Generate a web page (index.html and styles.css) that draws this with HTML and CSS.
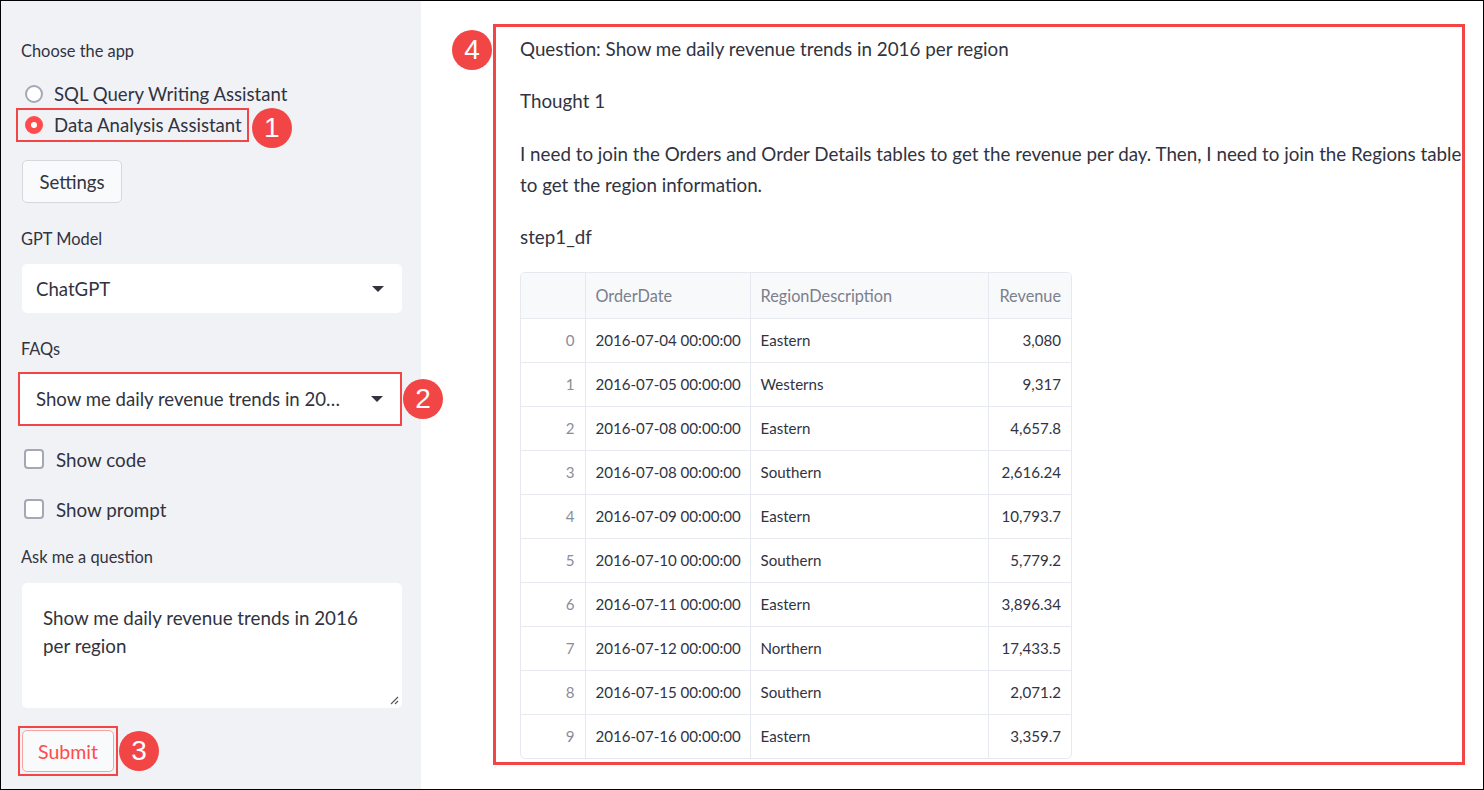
FILE: index.html
```html
<!DOCTYPE html>
<html>
<head>
<meta charset="utf-8">
<link rel="stylesheet" href="styles.css">
</head>
<body>
<div class="frame">
  <aside class="sidebar">
    <div class="label first">Choose the app</div>
    <div class="radio-group">
      <div class="radio-row"><span class="radio"></span><span>SQL Query Writing Assistant</span></div>
      <div class="radio-row annotated">
        <span class="radio on"></span><span>Data Analysis Assistant</span>
        <span class="badge b1">1</span>
      </div>
    </div>
    <button class="btn settings">Settings</button>
    <div class="label gap26">GPT Model</div>
    <div class="select"><span>ChatGPT</span><span class="caret"></span></div>
    <div class="label gap26">FAQs</div>
    <div class="select annotated-select"><span>Show me daily revenue trends in 20…</span><span class="caret"></span>
      <span class="badge b2">2</span>
    </div>
    <div class="check-row first-check"><span class="checkbox"></span><span>Show code</span></div>
    <div class="check-row"><span class="checkbox"></span><span>Show prompt</span></div>
    <div class="label ask">Ask me a question</div>
    <div class="textarea">Show me daily revenue trends in 2016<br>per region<span class="resize"><svg width="9" height="9" viewBox="0 0 9 9"><path d="M8 1L1 8M8 5L5 8" stroke="#555" stroke-width="1.1" fill="none"/></svg></span></div>
    <div class="submit-wrap">
      <button class="btn submit">Submit</button>
      <span class="badge b3">3</span>
    </div>
  </aside>
  <main class="main">
    <section class="output">
      <span class="badge b4">4</span>
      <p>Question: Show me daily revenue trends in 2016 per region</p>
      <p>Thought 1</p>
      <p>I need to join the Orders and Order Details tables to get the revenue per day. Then, I need to join the Regions table<br>to get the region information.</p>
      <p>step1_df</p>
      <div class="table-wrap">
        <table>
          <colgroup><col class="w-idx"><col class="w-date"><col class="w-region"><col class="w-rev"></colgroup>
          <thead>
            <tr><th class="idx"></th><th>OrderDate</th><th>RegionDescription</th><th class="num">Revenue</th></tr>
          </thead>
          <tbody>
            <tr><td class="idx">0</td><td>2016-07-04 00:00:00</td><td>Eastern</td><td class="num">3,080</td></tr>
            <tr><td class="idx">1</td><td>2016-07-05 00:00:00</td><td>Westerns</td><td class="num">9,317</td></tr>
            <tr><td class="idx">2</td><td>2016-07-08 00:00:00</td><td>Eastern</td><td class="num">4,657.8</td></tr>
            <tr><td class="idx">3</td><td>2016-07-08 00:00:00</td><td>Southern</td><td class="num">2,616.24</td></tr>
            <tr><td class="idx">4</td><td>2016-07-09 00:00:00</td><td>Eastern</td><td class="num">10,793.7</td></tr>
            <tr><td class="idx">5</td><td>2016-07-10 00:00:00</td><td>Southern</td><td class="num">5,779.2</td></tr>
            <tr><td class="idx">6</td><td>2016-07-11 00:00:00</td><td>Eastern</td><td class="num">3,896.34</td></tr>
            <tr><td class="idx">7</td><td>2016-07-12 00:00:00</td><td>Northern</td><td class="num">17,433.5</td></tr>
            <tr><td class="idx">8</td><td>2016-07-15 00:00:00</td><td>Southern</td><td class="num">2,071.2</td></tr>
            <tr><td class="idx">9</td><td>2016-07-16 00:00:00</td><td>Eastern</td><td class="num">3,359.7</td></tr>
          </tbody>
        </table>
      </div>
    </section>
  </main>
</div>
</body>
</html>
```

FILE: styles.css
```css
* { box-sizing: border-box; }
html, body { margin: 0; padding: 0; background: #fff; }
body {
  font-family: Lato, "Source Sans Pro", "Noto Sans", sans-serif;
  color: #31333f;
}
.frame {
  width: 1484px;
  height: 790px;
  border: 1px solid #000;
  display: flex;
  overflow: hidden;
}
.sidebar {
  width: 420px;
  flex: none;
  background: #f0f2f6;
  padding: 40px 19px 0 20px;
  display: flex;
  flex-direction: column;
  position: relative;
}
.label {
  font-size: 16.4px;
  line-height: 20px;
  height: 20px;
}
.gap26 { margin-top: 26px; }
.radio-group { margin-top: 17px; display: flex; flex-direction: column; }
.radio-row {
  display: flex;
  align-items: center;
  height: 32px;
  padding-left: 4px;
  font-size: 18.6px;
  gap: 11px;
  position: relative;
  width: fit-content;
}
.radio {
  width: 18px; height: 18px;
  border-radius: 50%;
  border: 2px solid #a3a8b4;
  background: #fff;
  flex: none;
}
.radio.on {
  border: 6px solid #ff4b4b;
  background: #fff;
}
.annotated {
  margin-left: -5px;
  margin-top: -2px;
  border: 2px solid #f24646;
  padding: 0 5px 0 7px;
  height: 34px;
}
.badge {
  position: absolute;
  width: 40px; height: 40px;
  border-radius: 50%;
  background: #f24646;
  color: #fff;
  font-family: "Liberation Sans", Arial, sans-serif;
  font-size: 28px;
  line-height: 40px;
  text-align: center;
}
.b1 { right: -45px; top: -2px; }
.btn {
  font-family: inherit;
  font-size: 18.6px;
  color: #31333f;
  background: #f9fafb;
  border: 1px solid #d6d8de;
  border-radius: 5px;
  cursor: pointer;
}
.settings {
  margin-top: 18px;
  width: 100px;
  height: 43px;
  padding: 0;
  margin-left: 1px;
}
.select {
  margin-top: 15px;
  margin-left: 1px;
  height: 49px;
  width: 380px;
  background: #fff;
  border-radius: 5px;
  display: flex;
  align-items: center;
  justify-content: space-between;
  padding: 0 18px 0 14px;
  font-size: 18.6px;
  position: relative;
}
.caret {
  width: 0; height: 0;
  border-left: 6px solid transparent;
  border-right: 6px solid transparent;
  border-top: 6px solid #31333f;
}
.annotated-select {
  margin-top: 13px;
  margin-left: -3px;
  width: 384px;
  height: 54px;
  border: 2px solid #f24646;
  border-radius: 0;
  padding: 0 17px 0 16px;
}
.b2 { right: -43px; top: 5px; }
.check-row {
  display: flex;
  align-items: center;
  gap: 12px;
  height: 24px;
  font-size: 18.8px;
  margin-top: 26px;
  padding-left: 3px;
}
.first-check { margin-top: 21px; }
.checkbox {
  width: 20px; height: 20px;
  border: 2px solid #a3a8b4;
  border-radius: 4px;
  background: #fff;
  flex: none;
}
.ask { margin-top: 26px; }
.textarea {
  margin-top: 16px;
  margin-left: 1px;
  width: 380px;
  height: 125px;
  background: #fff;
  border-radius: 5px;
  padding: 21px 21px 0 21px;
  font-size: 18.8px;
  line-height: 28px;
  position: relative;
}
.resize {
  position: absolute;
  right: 3px; bottom: 3px;
  width: 9px; height: 9px;
  display: block;
}
.resize svg { display: block; }
.submit-wrap {
  margin-top: 18px;
  margin-left: -3px;
  width: 100px;
  height: 50px;
  border: 2px solid #f24646;
  padding: 2px;
  position: relative;
}
.submit {
  width: 92px;
  height: 42px;
  color: #ff4b4b;
  padding: 0;
  border-color: #f9a0a0;
  font-size: 19.5px;
}
.b3 { right: -43px; top: 3px; }

.main {
  flex: 1;
  padding: 23px 16px 0 72px;
}
.output {
  position: relative;
  width: 972px;
  height: 741px;
  border: 3px solid #f24646;
  padding: 7px 0 0 24px;
}
.b4 { left: -44px; top: 3px; }
.output p {
  margin: 0 0 22px 0;
  font-size: 18.8px;
  line-height: 30px;
  white-space: nowrap;
}
.output p:nth-of-type(3) { line-height: 31px; }
.output p:nth-of-type(4) { margin-bottom: 20px; }
.table-wrap {
  width: 552px;
  border: 1px solid #e6e9ef;
  border-radius: 5px;
  overflow: hidden;
}
table {
  border-collapse: collapse;
  width: 550px;
  table-layout: fixed;
  font-size: 15.1px;
}
.w-idx { width: 64px; }
.w-date { width: 165px; }
.w-region { width: 238px; }
.w-rev { width: 83px; }
th, td {
  border-right: 1px solid #e6e9ef;
  border-bottom: 1px solid #e6e9ef;
  padding: 0 10px;
  text-align: left;
  white-space: nowrap;
  overflow: hidden;
}
th:last-child, td:last-child { border-right: none; }
tbody tr:last-child td { border-bottom: none; }
th {
  height: 45px;
  background: #f8f9fb;
  font-weight: normal;
  color: #7c7f8c;
  font-size: 16.3px;
}
td { height: 44px; color: #31333f; }
td.idx, th.idx { text-align: right; color: #8a8d99; }
.num { text-align: right; }
```
